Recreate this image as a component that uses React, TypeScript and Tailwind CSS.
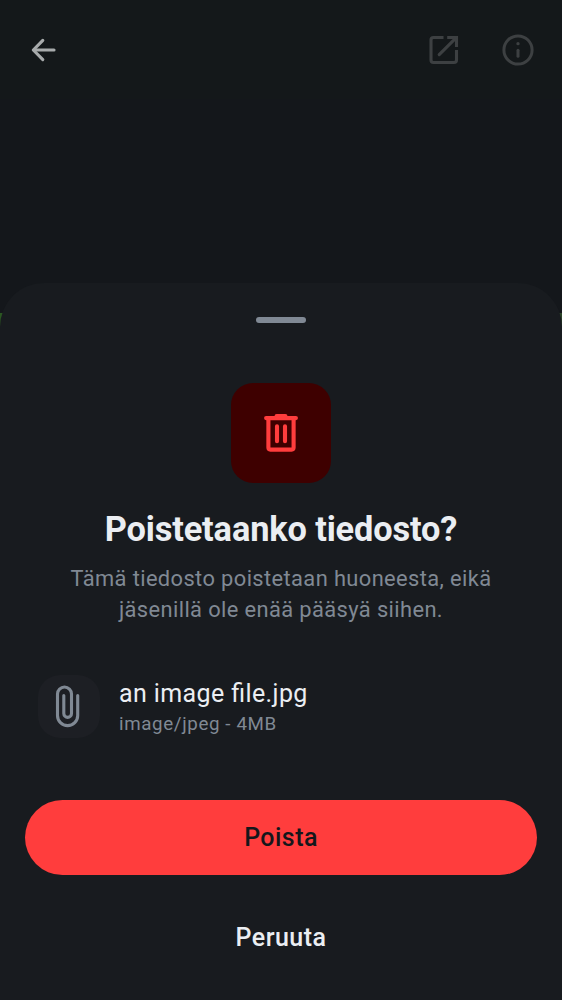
import React from "react";

function BackIcon() {
  return (
    <svg width="26" height="26" viewBox="31 37 26 26" fill="none" stroke="#a8abac" strokeWidth="3.1" strokeLinecap="round" strokeLinejoin="round">
      <path d="M42.8 40.3L33.3 50L42.8 59.7" />
      <path d="M34 50H54" />
    </svg>
  );
}

function OpenIcon() {
  return (
    <svg width="30" height="30" viewBox="428.5 35 30 30" fill="none" stroke="#3d4042" strokeWidth="3.1">
      <path d="M443 37.5H433Q430.5 37.5 430.5 40V60Q430.5 62.5 433 62.5H453.5Q456 62.5 456 60V50" />
      <path d="M446.7 37.5H456V47" />
      <path d="M438.7 54.7L455.3 38.2" strokeLinecap="round" />
    </svg>
  );
}

function InfoIcon() {
  return (
    <svg width="32" height="32" viewBox="502.3 34 32 32" fill="none" stroke="#3d4042" strokeWidth="3">
      <circle cx="518.3" cy="50" r="14.1" />
      <path d="M518.3 50.3V56.3" strokeLinecap="round" />
      <circle cx="518.3" cy="43.7" r="1.65" fill="#3d4042" stroke="none" />
    </svg>
  );
}

function TrashIcon() {
  return (
    <svg width="38" height="40" viewBox="262 413 38 40" fill="none" stroke="#ff3d3d" strokeWidth="4.1" strokeLinecap="round">
      <path d="M266.1 418.1H295.9" />
      <path d="M276.6 416H285.4" />
      <path d="M268.4 419V447.6Q268.4 449.6 270.4 449.6H291.6Q293.6 449.6 293.6 447.6V419" />
      <path d="M277 426.3V441.3M285 426.3V441.3" />
    </svg>
  );
}

function ClipIcon() {
  return (
    <svg width="26" height="44" viewBox="55 684 26 44" fill="none" stroke="#808994" strokeWidth="3.1" strokeLinecap="round">
      <path d="M77.7 695.5V715.5A10.1 10.1 0 0 1 57.5 715.5V694A7 7 0 0 1 71.5 694V713.5A3.85 3.85 0 0 1 63.8 713.5V695.5" />
    </svg>
  );
}

export default function App() {
  return (
    <div className="relative flex h-[1000px] w-[562px] flex-col overflow-hidden bg-[#14171b] font-['Roboto',sans-serif]">
      <header className="flex h-[99px] shrink-0 items-center justify-between bg-[#14181a] pr-[27.7px] pl-[31px] pt-px">
        <button aria-label="Takaisin"><BackIcon /></button>
        <div className="flex items-center gap-[43.8px]">
          <button aria-label="Avaa"><OpenIcon /></button>
          <button aria-label="Tiedot"><InfoIcon /></button>
        </div>
      </header>
      <div className="mt-[214px] flex h-[400px] shrink-0 justify-between">
        <div className="w-2 bg-[#2b5722]" />
        <div className="w-2 bg-[#2c4428]" />
      </div>
      <section className="absolute inset-x-0 top-[283px] bottom-0 flex flex-col items-center rounded-t-[44px] bg-[#181b1f]">
        <div className="flex h-[100px] shrink-0 pt-[34px]">
          <div className="h-[6.25px] w-[50px] rounded-full bg-[#808994]" />
        </div>
        <div className="flex size-[100px] shrink-0 items-center justify-center rounded-[22px] bg-[#3e0000]">
          <TrashIcon />
        </div>
        <h1 className="mt-[24px] h-[44px] text-[34.375px] leading-[44px] font-bold tracking-[-0.13px] whitespace-nowrap text-[#ebeef2]">Poistetaanko tiedosto?</h1>
        <p className="mt-[12px] h-[62px] text-center text-[21.875px] leading-[31.25px] tracking-[0.39px] whitespace-nowrap text-[#808994]">
          Tämä tiedosto poistetaan huoneesta, eikä<br />jäsenillä ole enää pääsyä siihen.
        </p>
        <div className="mt-[50px] flex h-[62.5px] w-full items-center pl-[37.5px]">
          <div className="flex size-[62.5px] items-center justify-center rounded-[22px] bg-[#1d1f24] pr-px">
            <ClipIcon />
          </div>
          <div className="ml-[19px]">
            <div className="h-[37.5px] text-[25px] leading-[37.5px] tracking-[0.39px] [font-feature-settings:'liga'_1] text-[#ebeef2]">an image file.jpg</div>
            <div className="h-[25px] text-[18.75px] leading-[23px] tracking-[0.62px] text-[#808994]">image/jpeg - 4MB</div>
          </div>
        </div>
        <button className="mt-[62.5px] h-[75px] w-[512px] shrink-0 rounded-full bg-[#ff3d3d] text-[25px] font-medium tracking-[0.45px] text-[#14171b]">Poista</button>
        <button className="mt-[25px] h-[75px] w-[512px] shrink-0 text-[25px] font-medium tracking-[0.45px] text-[#ebeef2]">Peruuta</button>
      </section>
    </div>
  );
}
